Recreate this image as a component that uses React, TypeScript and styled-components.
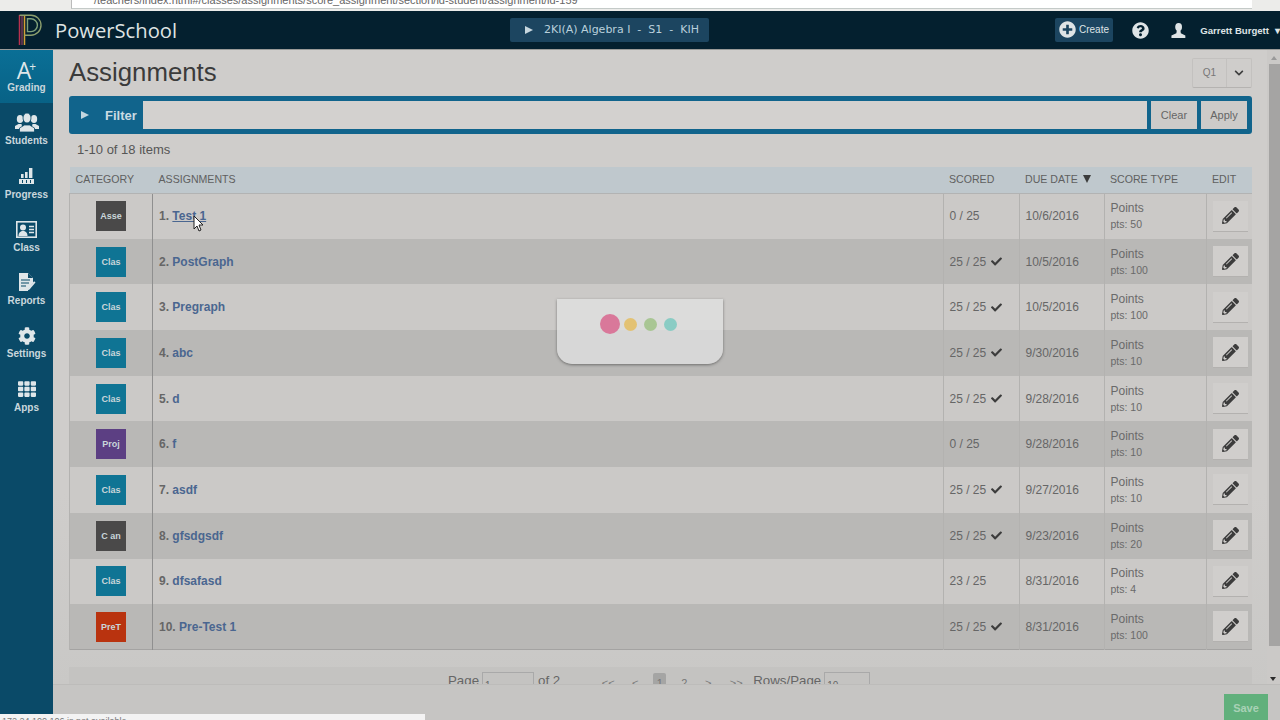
import React from 'react';
import styled, { createGlobalStyle } from 'styled-components';
import { FaCheck, FaChevronDown, FaCog, FaPencilAlt, FaPlusCircle, FaQuestionCircle, FaTh } from 'react-icons/fa';

const GlobalStyle = createGlobalStyle`
  html, body {
    margin: 0;
    height: 100%;
    overflow: hidden;
  }
  body {
    font-family: 'Liberation Sans', Arial, sans-serif;
    color: #4a4a4a;
  }
  #root {
    height: 100%;
  }
`;

const Page = styled.div`
  position: relative;
  display: flex;
  flex-direction: column;
  width: 1280px;
  height: 720px;
  overflow: hidden;
  background: #cbc9c7;
`;

const BrowserStrip = styled.div`
  flex: none;
  height: 11px;
  display: flex;
  background: #ececea;
  overflow: hidden;
`;

const UrlBox = styled.div`
  flex: 1;
  margin: 0 28px 2px 71px;
  padding-left: 22px;
  background: #fff;
  border-left: 1px solid #bbb;
  border-bottom: 1px solid #c4cac8;
  font-size: 11px;
  line-height: 1px;
  color: #666;
  white-space: nowrap;
  overflow: hidden;
`;

const Header = styled.header`
  flex: none;
  height: 38px;
  display: grid;
  grid-template-columns: 510px auto 1fr;
  align-items: center;
  background: #04202f;
  border-bottom: 1px solid #9a9a98;
  box-sizing: content-box;
`;

const Brand = styled.div`
  display: flex;
  align-items: center;
  gap: 14px;
  padding-left: 18px;
`;

const BrandName = styled.span`
  font-family: 'Open Sans', 'Liberation Sans', sans-serif;
  font-size: 20.2px;
  color: #dfe3e3;
  margin-left: -1px;
`;

const ClassButton = styled.div`
  display: flex;
  align-items: center;
  width: 199px;
  height: 24px;
  box-sizing: border-box;
  padding-left: 15px;
  margin-top: -1px;
  border-radius: 2px;
  background: #1c4560;
  color: #b9d0dc;
  font-family: 'DejaVu Sans', sans-serif;
  font-size: 11px;
  white-space: nowrap;
`;

const ClassArrow = styled.span`
  width: 0;
  height: 0;
  margin-right: 11px;
  border-left: 8px solid #c6d6de;
  border-top: 4.5px solid transparent;
  border-bottom: 4.5px solid transparent;
`;

const HeaderActions = styled.div`
  display: flex;
  align-items: center;
  justify-content: flex-end;
  height: 100%;
  color: #dfe4e6;
  overflow: hidden;
`;

const CreateButton = styled.div`
  display: flex;
  align-items: center;
  gap: 3px;
  width: 58px;
  height: 24px;
  box-sizing: border-box;
  padding-left: 4px;
  margin-top: -1px;
  border-radius: 2px;
  background: #1c4560;
  font-size: 10px;
`;

const HelpSlot = styled.div`
  display: flex;
  justify-content: center;
  width: 54px;
  padding-right: 4px;
  margin-top: 1px;
`;

const UserSlot = styled.div`
  display: flex;
  align-items: center;
  gap: 14px;
  width: 109px;
  font-size: 9.6px;
  font-weight: bold;
  white-space: nowrap;
`;

const Caret = styled.span`
  margin-left: -8px;
`;

const Body = styled.div`
  flex: 1;
  display: flex;
  min-height: 0;
`;

const Sidebar = styled.nav`
  flex: none;
  width: 53px;
  background: #0a4a68;
`;

const NavItem = styled.div<{ $active?: boolean }>`
  display: flex;
  flex-direction: column;
  align-items: center;
  height: 53.3px;
  padding-top: 8px;
  box-sizing: border-box;
  color: #c9d7dd;
  font-size: 10px;
  font-weight: bold;
  background: ${(p) => (p.$active ? 'linear-gradient(#0a6f96, #086286)' : 'transparent')};
`;

const NavIcon = styled.div`
  display: flex;
  align-items: center;
  justify-content: center;
  height: 23px;
  margin-bottom: 1px;
  color: #dfe6e9;
`;

const GradeIcon = styled.span`
  font-family: 'Open Sans', sans-serif;
  font-size: 23px;
  font-weight: 400;
  line-height: 20px;

  sup {
    font-size: 12px;
    line-height: 0;
    vertical-align: 8px;
    margin-left: -2px;
  }
`;

const Main = styled.div`
  position: relative;
  flex: 1;
  display: flex;
  flex-direction: column;
  min-width: 0;
`;

const Scroller = styled.div`
  flex: 1;
  display: flex;
  min-height: 0;
  overflow: hidden;
`;

const Content = styled.main`
  flex: 1;
  min-width: 0;
  padding: 9px 15px 0 16px;
  background: linear-gradient(#cfcdcb 70%, #c9c8c6);
`;

const TitleRow = styled.div`
  display: flex;
  align-items: center;
  justify-content: space-between;
  height: 27px;
  margin-bottom: 10px;
`;

const Title = styled.h1`
  margin: 0;
  font-family: 'Liberation Sans', sans-serif;
  font-size: 25.8px;
  font-weight: 400;
  color: #3b3b3b;
`;

const TermPicker = styled.div`
  display: flex;
  align-items: center;
  height: 28px;
  margin-top: 1px;
  border: 1px solid #c3c1bf;
  border-bottom-color: #b5b3b1;
  border-radius: 2px;
  font-size: 10px;
  color: #777;
`;

const TermName = styled.span`
  width: 33px;
  line-height: 28px;
  text-align: center;
  border-right: 1px solid #c3c1bf;
`;

const TermArrow = styled.span`
  display: flex;
  justify-content: center;
  width: 24px;
  color: #3e3e3e;
`;

const FilterBar = styled.div`
  display: flex;
  align-items: stretch;
  gap: 4px;
  height: 38px;
  box-sizing: border-box;
  padding: 5px 5px 5px 0;
  border-radius: 3px;
  background: #11648c;
`;

const FilterLabel = styled.div`
  display: flex;
  align-items: center;
  width: 74px;
  margin-right: -4px;
  padding-left: 12px;
  box-sizing: border-box;
  font-size: 13px;
  font-weight: bold;
  color: #c9dbe3;
`;

const FilterArrow = styled.span`
  width: 0;
  height: 0;
  margin-right: 16px;
  border-left: 8px solid #c3d6df;
  border-top: 4.5px solid transparent;
  border-bottom: 4.5px solid transparent;
`;

const FilterInput = styled.div`
  flex: 1;
  background: #d3d1cf;
`;

const FilterButton = styled.div<{ $width: number }>`
  display: flex;
  align-items: center;
  justify-content: center;
  width: ${(p) => p.$width}px;
  background: #cdcbc9;
  font-size: 11px;
  color: #666;
`;

const ItemCount = styled.div`
  height: 33px;
  padding-left: 8px;
  font-size: 13px;
  line-height: 31px;
  color: #565656;
`;

const Table = styled.table`
  width: 100%;
  table-layout: fixed;
  border-collapse: collapse;
  border-bottom: 1px solid #a4a3a2;
`;

const Th = styled.th<{ $width?: number }>`
  box-sizing: border-box;
  width: ${(p) => (p.$width ? `${p.$width}px` : 'auto')};
  height: 26px;
  padding: 0 0 2px 6px;
  background: #bfc8cd;
  border-bottom: 1px solid #b2b3b3;
  font-size: 10.6px;
  font-weight: 400;
  color: #606060;
  text-align: left;
  white-space: nowrap;
`;

const SortMark = styled.span`
  display: inline-block;
  width: 0;
  height: 0;
  margin-left: 5px;
  border-top: 8px solid #3c3c3c;
  border-left: 4.5px solid transparent;
  border-right: 4.5px solid transparent;
`;

const Tr = styled.tr<{ $dark: boolean }>`
  height: 45.7px;
  background: ${(p) => (p.$dark ? '#b9b8b6' : '#cbc9c7')};
`;

const Td = styled.td<{ $lined?: boolean }>`
  padding: 0 0 0 6px;
  border-left: 1px solid ${(p) => (p.$lined ? '#8f8f8f' : '#b3b2b0')};
  font-size: 12px;
  color: #666;
  white-space: nowrap;
`;

const CategoryCell = styled.td`
  padding: 0;
  border-left: 1px solid #b3b2b0;
  text-align: center;
`;

const CategoryBox = styled.div<{ $color: string }>`
  display: flex;
  align-items: center;
  justify-content: center;
  width: 30px;
  height: 30px;
  margin: 0 auto;
  background: ${(p) => p.$color};
  font-size: 9px;
  font-weight: bold;
  color: #c9d6da;
`;

const RowName = styled.span`
  font-size: 12px;
  font-weight: bold;
  color: #666;
`;

const AssignmentLink = styled.span<{ $hover?: boolean }>`
  color: #4a6690;
  text-decoration: ${(p) => (p.$hover ? 'underline' : 'none')};
`;

const ScoreWrap = styled.span`
  display: flex;
  align-items: center;
  gap: 5px;
`;

const PointsName = styled.div`
  font-size: 12px;
  line-height: 16px;
  color: #6a6a6a;
`;

const PointsValue = styled.div`
  font-size: 10.5px;
  line-height: 16px;
  color: #6a6a6a;
`;

const EditButton = styled.div`
  display: flex;
  align-items: center;
  justify-content: center;
  width: 35px;
  height: 30px;
  background: #d0cecc;
  border-bottom: 1px solid #b3b1af;
  color: #3c3c3c;
`;

const Pager = styled.div`
  display: flex;
  align-items: flex-start;
  height: 24px;
  margin-top: 17px;
  padding: 6px 0 0 379px;
  background: #c4c3c1;
  font-size: 13.3px;
  line-height: 16px;
  color: #666;
`;

const PagerField = styled.span<{ $width: number }>`
  display: inline-block;
  width: ${(p) => p.$width}px;
  height: 24px;
  margin: -1px 4px 0 3px;
  padding-left: 2px;
  box-sizing: border-box;
  border: 1px solid #a9a9a9;
  font-size: 10px;
  line-height: 26px;
`;

const PagerLink = styled.span<{ $current?: boolean; $width: number; $before?: number; $after?: number }>`
  width: ${(p) => p.$width}px;
  height: 16px;
  margin-left: ${(p) => p.$before ?? 0}px;
  margin-right: ${(p) => p.$after ?? 0}px;
  border-radius: 2px;
  background: ${(p) => (p.$current ? '#a5a5a4' : 'transparent')};
  font-size: 11px;
  text-align: center;
  line-height: 20px;
  color: #777;
`;

const ScrollTrack = styled.div`
  flex: none;
  position: relative;
  width: 13px;
  background: #cbc9c7;
`;

const ScrollThumb = styled.div`
  position: absolute;
  top: 14px;
  left: 2px;
  width: 11px;
  height: 582px;
  background: #a5a4a3;
`;

const ScrollUp = styled.div`
  position: absolute;
  top: 6px;
  left: 4px;
  border-bottom: 4px solid #999;
  border-left: 3px solid transparent;
  border-right: 3px solid transparent;
`;

const ScrollDown = styled.div`
  position: absolute;
  bottom: 3px;
  left: 3px;
  border-top: 4px solid #2a2a2a;
  border-left: 3.5px solid transparent;
  border-right: 3.5px solid transparent;
`;

const SaveBar = styled.footer`
  flex: none;
  display: flex;
  justify-content: flex-end;
  align-items: flex-start;
  height: 36px;
  padding: 9px 12px 0 0;
  box-sizing: border-box;
  background: #c6c5c3;
  border-top: 1px solid #bdbcba;
`;

const SaveButton = styled.div`
  width: 44px;
  height: 27px;
  background: #61b07c;
  font-size: 11px;
  font-weight: bold;
  line-height: 28px;
  text-align: center;
  color: #a9d2b6;
`;

const Loader = styled.div`
  position: absolute;
  top: 249px;
  left: 504px;
  display: flex;
  gap: 7px;
  width: 166px;
  height: 65px;
  padding: 15px 0 0 43px;
  box-sizing: border-box;
  border-radius: 0 0 15px 15px;
  background: rgba(226, 226, 226, 0.75);
  box-shadow: 0 1px 3px rgba(60, 60, 60, 0.6);
`;

const Dot = styled.span<{ $color: string; $size: number }>`
  width: ${(p) => p.$size}px;
  height: ${(p) => p.$size}px;
  margin-top: ${(p) => (20 - p.$size) / 2}px;
  margin-right: ${(p) => (p.$size > 14 ? -3 : 0)}px;
  border-radius: 50%;
  background: ${(p) => p.$color};
`;

const StatusBubble = styled.div`
  position: absolute;
  left: 0;
  bottom: 0;
  width: 425px;
  height: 6px;
  padding: 2px 0 0 2px;
  box-sizing: border-box;
  overflow: hidden;
  background: #f3f3f3;
  font-size: 9px;
  line-height: 10px;
  color: #777;
`;

const Cursor = styled.svg`
  position: absolute;
  top: 215px;
  left: 193px;
`;

const PowerSchoolLogo = () => (
  <svg width="24" height="32" viewBox="0 0 24 32" fill="none">
    <path d="M1.500 1V31" stroke="#b8314f" strokeWidth="1.500" />
    <path d="M4 1V31" stroke="#a9436b" strokeWidth="1" />
    <path d="M6.500 1V31" stroke="#d8a034" strokeWidth="1.500" />
    <path d="M1.500 1.200H13a10 10 0 0 1 0 20H6.500" stroke="#8d9f6d" strokeWidth="1.400" />
    <path d="M9.500 4.800H13a6.400 6.400 0 0 1 0 12.800H9.500V4.800Z" stroke="#7fa07a" strokeWidth="1.400" />
  </svg>
);

const UserIcon = () => (
  <svg width="17" height="17" viewBox="0 0 17 17" fill="currentColor">
    <ellipse cx="8.500" cy="4.500" rx="3.800" ry="4.500" />
    <path d="M6.500 8h4l.5 3.500 5 2.500v3H.5v-3l5.500-2.500Z" />
  </svg>
);

const StudentsIcon = () => (
  <svg width="24" height="19" viewBox="0 0 24 19" fill="currentColor">
    <ellipse cx="5" cy="6" rx="3.200" ry="4" />
    <ellipse cx="19" cy="6" rx="3.200" ry="4" />
    <path d="M0 16v-3l3.500-2h3l1 5Z" />
    <path d="M24 16v-3l-3.500-2h-3l-1 5Z" />
    <ellipse cx="12" cy="5" rx="4" ry="5" stroke="#0a4a68" strokeWidth="0.800" />
    <path d="M4.500 19v-4l5-3h5l5 3v4Z" stroke="#0a4a68" strokeWidth="0.800" />
  </svg>
);

const ProgressIcon = () => (
  <svg width="15" height="16" viewBox="0 0 15 16" fill="currentColor">
    <rect x="2" y="6" width="2.600" height="4" />
    <rect x="6" y="4" width="2.600" height="6" />
    <rect x="10" y="0" width="3.400" height="10" />
    <path d="M0 11h15v5H0Zm3 1v3h1v-3Zm4 0v3h1v-3Zm4 0v3h1v-3Z" fillRule="evenodd" />
  </svg>
);

const ClassIcon = () => (
  <svg width="21" height="17" viewBox="0 0 21 17">
    <rect x="0.800" y="0.800" width="19.400" height="15.400" fill="none" stroke="currentColor" strokeWidth="1.600" />
    <circle cx="7" cy="6.500" r="3" fill="currentColor" />
    <path d="M2.500 15c0-3.500 2-5 4.500-5s4.500 1.500 4.500 5Z" fill="currentColor" />
    <path d="M13 5.500h5M13 8.500h5M13 11.500h5" stroke="currentColor" strokeWidth="1.400" />
  </svg>
);

const ReportsIcon = () => (
  <svg width="18" height="19" viewBox="0 0 18 19" fill="currentColor">
    <path d="M1 0h9l5 5v5l-5 6.500V18H1Z" />
    <path d="M10 0v5h5Z" fill="#0a4a68" />
    <path d="M3 7h9M3 10h8M3 13h5" stroke="#0a4a68" strokeWidth="1.100" />
    <path d="M17.500 9.500l-6 7-2 1 .6-2.200 6-7Z" />
  </svg>
);

const rows = [
  { name: 'Test 1', cat: 'Asse', color: '#4a4949', score: '0 / 25', done: false, due: '10/6/2016', pts: 50 },
  { name: 'PostGraph', cat: 'Clas', color: '#0f7494', score: '25 / 25', done: true, due: '10/5/2016', pts: 100 },
  { name: 'Pregraph', cat: 'Clas', color: '#0f7494', score: '25 / 25', done: true, due: '10/5/2016', pts: 100 },
  { name: 'abc', cat: 'Clas', color: '#0f7494', score: '25 / 25', done: true, due: '9/30/2016', pts: 10 },
  { name: 'd', cat: 'Clas', color: '#0f7494', score: '25 / 25', done: true, due: '9/28/2016', pts: 10 },
  { name: 'f', cat: 'Proj', color: '#5c3f83', score: '0 / 25', done: false, due: '9/28/2016', pts: 10 },
  { name: 'asdf', cat: 'Clas', color: '#0f7494', score: '25 / 25', done: true, due: '9/27/2016', pts: 10 },
  { name: 'gfsdgsdf', cat: 'C an', color: '#4a4949', score: '25 / 25', done: true, due: '9/23/2016', pts: 20 },
  { name: 'dfsafasd', cat: 'Clas', color: '#0f7494', score: '23 / 25', done: false, due: '8/31/2016', pts: 4 },
  { name: 'Pre-Test 1', cat: 'PreT', color: '#b9330f', score: '25 / 25', done: true, due: '8/31/2016', pts: 100 },
];

const App = () => {
  return (
    <Page>
      <GlobalStyle />
      <BrowserStrip>
        <UrlBox>/teachers/index.html#/classes/assignments/score_assignment/section/id-student/assignment/id-159</UrlBox>
      </BrowserStrip>
      <Header>
        <Brand>
          <PowerSchoolLogo />
          <BrandName>PowerSchool</BrandName>
        </Brand>
        <ClassButton>
          <ClassArrow />
          2KI(A) Algebra I&nbsp; -&nbsp; S1&nbsp; -&nbsp; KIH
        </ClassButton>
        <HeaderActions>
          <CreateButton>
            <FaPlusCircle size={17} />
            Create
          </CreateButton>
          <HelpSlot>
            <FaQuestionCircle size={17} />
          </HelpSlot>
          <UserSlot>
            <UserIcon />
            Garrett Burgett
            <Caret>▾</Caret>
          </UserSlot>
        </HeaderActions>
      </Header>
      <Body>
        <Sidebar>
          <NavItem $active>
            <NavIcon>
              <GradeIcon>
                A<sup>+</sup>
              </GradeIcon>
            </NavIcon>
            Grading
          </NavItem>
          <NavItem>
            <NavIcon>
              <StudentsIcon />
            </NavIcon>
            Students
          </NavItem>
          <NavItem>
            <NavIcon>
              <ProgressIcon />
            </NavIcon>
            Progress
          </NavItem>
          <NavItem>
            <NavIcon>
              <ClassIcon />
            </NavIcon>
            Class
          </NavItem>
          <NavItem>
            <NavIcon>
              <ReportsIcon />
            </NavIcon>
            Reports
          </NavItem>
          <NavItem>
            <NavIcon>
              <FaCog size={18} />
            </NavIcon>
            Settings
          </NavItem>
          <NavItem>
            <NavIcon>
              <FaTh size={18} />
            </NavIcon>
            Apps
          </NavItem>
        </Sidebar>
        <Main>
          <Scroller>
            <Content>
              <TitleRow>
                <Title>Assignments</Title>
                <TermPicker>
                  <TermName>Q1</TermName>
                  <TermArrow>
                    <FaChevronDown size={10} />
                  </TermArrow>
                </TermPicker>
              </TitleRow>
              <FilterBar>
                <FilterLabel>
                  <FilterArrow />
                  Filter
                </FilterLabel>
                <FilterInput />
                <FilterButton $width={46}>Clear</FilterButton>
                <FilterButton $width={46}>Apply</FilterButton>
              </FilterBar>
              <ItemCount>1-10 of 18 items</ItemCount>
              <Table>
                <thead>
                  <tr>
                    <Th $width={83}>CATEGORY</Th>
                    <Th>ASSIGNMENTS</Th>
                    <Th $width={76}>SCORED</Th>
                    <Th $width={85}>
                      DUE DATE
                      <SortMark />
                    </Th>
                    <Th $width={102}>SCORE TYPE</Th>
                    <Th $width={46}>EDIT</Th>
                  </tr>
                </thead>
                <tbody>
                  {rows.map((row, i) => (
                    <Tr key={row.name} $dark={i % 2 === 1}>
                      <CategoryCell>
                        <CategoryBox $color={row.color}>{row.cat}</CategoryBox>
                      </CategoryCell>
                      <Td $lined>
                        <RowName>
                          {i + 1}. <AssignmentLink $hover={i === 0}>{row.name}</AssignmentLink>
                        </RowName>
                      </Td>
                      <Td>
                        <ScoreWrap>
                          {row.score}
                          {row.done && <FaCheck size={11} color="#3c3c3c" />}
                        </ScoreWrap>
                      </Td>
                      <Td>{row.due}</Td>
                      <Td>
                        <PointsName>Points</PointsName>
                        <PointsValue>pts: {row.pts}</PointsValue>
                      </Td>
                      <Td>
                        <EditButton>
                          <FaPencilAlt size={17} />
                        </EditButton>
                      </Td>
                    </Tr>
                  ))}
                </tbody>
              </Table>
              <Pager>
                Page<PagerField $width={52}>1</PagerField>of 2
                <PagerLink $width={24} $before={36}>&lt;&lt;</PagerLink>
                <PagerLink $width={30} $after={3}>&lt;</PagerLink>
                <PagerLink $width={13} $current>1</PagerLink>
                <PagerLink $width={36}>2</PagerLink>
                <PagerLink $width={12}>&gt;</PagerLink>
                <PagerLink $width={30} $before={7} $after={2}>&gt;&gt;</PagerLink>
                Rows/Page<PagerField $width={46}>10</PagerField>
              </Pager>
            </Content>
            <ScrollTrack>
              <ScrollUp />
              <ScrollThumb />
              <ScrollDown />
            </ScrollTrack>
          </Scroller>
          <SaveBar>
            <SaveButton>Save</SaveButton>
          </SaveBar>
          <Loader>
            <Dot $color="#d9789a" $size={20} />
            <Dot $color="#e3c273" $size={13} />
            <Dot $color="#a9c694" $size={13} />
            <Dot $color="#8accc4" $size={13} />
          </Loader>
        </Main>
      </Body>
      <StatusBubble>172.24.100.106 is not available</StatusBubble>
      <Cursor width="12" height="18" viewBox="0 0 12 18">
        <path d="M1 1v13l3-3 2 5 2-1-2-5h4Z" fill="#fff" stroke="#222" strokeWidth="1" />
      </Cursor>
    </Page>
  );
};

export default App;
